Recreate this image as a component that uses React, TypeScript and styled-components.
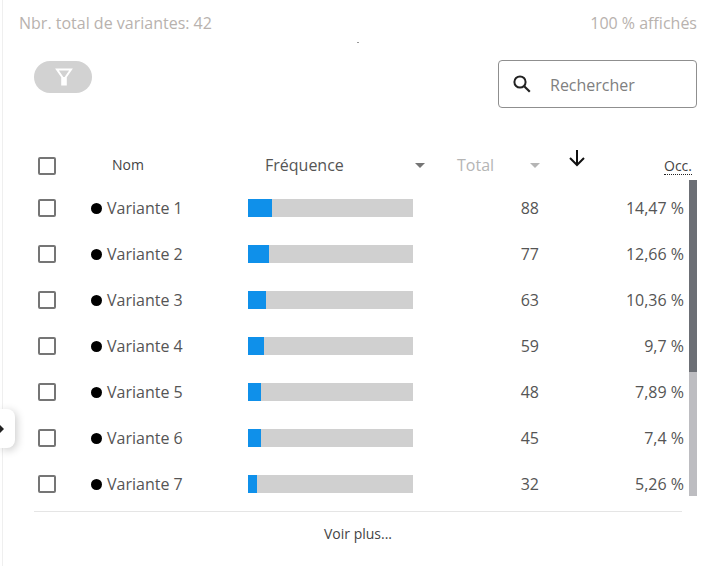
import styled, { createGlobalStyle } from "styled-components";

const GlobalStyle = createGlobalStyle`
  html, body {
    margin: 0;
    padding: 0;
    background: #fff;
    overflow: hidden;
    font-family: "Open Sans", "Liberation Sans", sans-serif;
  }
`;

const variants = [
  { name: "Variante 1", freq: 24, total: 88, occ: "14,47 %" },
  { name: "Variante 2", freq: 21, total: 77, occ: "12,66 %" },
  { name: "Variante 3", freq: 17.5, total: 63, occ: "10,36 %" },
  { name: "Variante 4", freq: 16, total: 59, occ: "9,7 %" },
  { name: "Variante 5", freq: 13, total: 48, occ: "7,89 %" },
  { name: "Variante 6", freq: 12.5, total: 45, occ: "7,4 %" },
  { name: "Variante 7", freq: 9, total: 32, occ: "5,26 %" },
];

const App = () => {
  return (
    <>
      <GlobalStyle />
      <Card>
        <SideHandle>
          <HandleCaret />
        </SideHandle>
        <Summary>
          <span>Nbr. total de variantes: 42</span>
          <span>100 % affichés</span>
        </Summary>
        <Speck />
        <Toolbar>
          <FilterButton aria-label="Filtrer">
            <svg width="18" height="18" viewBox="0 0 18 18">
              <path
                d="M2 1.5h14L10.8 9v7.5H7.2V9z"
                fill="none"
                stroke="#fff"
                strokeWidth="2"
              />
              <path d="M7.2 9h3.6v7.5H7.2z" fill="#fff" />
            </svg>
          </FilterButton>
          <SearchBox>
            <svg width="20" height="20" viewBox="0 0 20 20">
              <circle cx="8" cy="8" r="5.6" fill="none" stroke="#222" strokeWidth="2" />
              <path d="M12.2 12.2l5.6 5.6" stroke="#222" strokeWidth="2.2" />
            </svg>
            <SearchInput placeholder="Rechercher" />
          </SearchBox>
        </Toolbar>
        <HeaderRow>
          <HeaderCheckbox />
          <NameHead>Nom</NameHead>
          <FreqHead>
            <span>Fréquence</span>
            <Caret />
          </FreqHead>
          <TotalHead>
            <span>Total</span>
            <Caret $muted />
          </TotalHead>
          <ArrowCell>
            <svg width="18" height="18" viewBox="0 0 18 18">
              <path
                d="M9 1v15M2 9l7 7 7-7"
                fill="none"
                stroke="#111"
                strokeWidth="2"
              />
            </svg>
          </ArrowCell>
          <OccHead>Occ.</OccHead>
        </HeaderRow>
        <ListArea>
          <Rows>
            {variants.map((v) => (
              <Row key={v.name}>
                <Checkbox />
                <NameCell>
                  <Dot />
                  {v.name}
                </NameCell>
                <Bar>
                  <BarFill style={{ width: `${v.freq}px` }} />
                </Bar>
                <TotalCell>{v.total}</TotalCell>
                <OccCell>{v.occ}</OccCell>
              </Row>
            ))}
          </Rows>
          <ScrollTrack>
            <ScrollThumb />
          </ScrollTrack>
        </ListArea>
        <Footer>Voir plus...</Footer>
      </Card>
    </>
  );
};

const Card = styled.div`
  position: relative;
  box-sizing: border-box;
  width: 705px;
  height: 566px;
  margin-left: 2px;
  padding: 0 10px 0 0;
  border-left: 1px solid #efefef;
`;

const SideHandle = styled.div`
  position: absolute;
  left: -3px;
  top: 409px;
  width: 15px;
  height: 39px;
  display: flex;
  align-items: center;
  background: #fff;
  border-radius: 0 8px 8px 0;
  box-shadow: 2px 2px 8px rgba(0, 0, 0, 0.2);
`;

const HandleCaret = styled.div`
  width: 0;
  height: 0;
  border-top: 4px solid transparent;
  border-bottom: 4px solid transparent;
  border-left: 4px solid #222;
`;

const Summary = styled.div`
  display: flex;
  justify-content: space-between;
  padding: 12px 0 0 16px;
  height: 22px;
  line-height: 22px;
  font-size: 16px;
  color: #b8b2ae;
`;

const Speck = styled.div`
  width: 2px;
  height: 1px;
  margin: 8px 0 0 354px;
  background: #999;
`;

const Toolbar = styled.div`
  display: flex;
  justify-content: space-between;
  align-items: flex-start;
  margin-top: 17px;
  padding-left: 31px;
`;

const FilterButton = styled.button`
  width: 58px;
  height: 32px;
  margin-top: 1px;
  display: flex;
  align-items: center;
  justify-content: center;
  padding: 0 0 0 1px;
  border: none;
  border-radius: 16px;
  background: #d2d2d2;
`;

const SearchBox = styled.div`
  box-sizing: border-box;
  width: 199px;
  height: 48px;
  display: flex;
  align-items: center;
  gap: 18px;
  padding-left: 13px;
  border: 1px solid #8f8f8f;
  border-radius: 4px;
`;

const SearchInput = styled.input`
  width: 120px;
  padding: 2px 0 0;
  border: none;
  outline: none;
  font-family: inherit;
  font-size: 16px;
  color: #333;
  &::placeholder {
    color: #808080;
    opacity: 1;
  }
`;

const HeaderRow = styled.div`
  display: grid;
  grid-template-columns: 53px 157px 209px 111px 1fr auto;
  align-items: center;
  height: 36px;
  margin-top: 39px;
  padding: 0 5px 0 35px;
`;

const Checkbox = styled.div`
  box-sizing: border-box;
  width: 18px;
  height: 18px;
  border: 2px solid #757575;
  border-radius: 2px;
`;

const HeaderCheckbox = styled(Checkbox)`
  margin-top: 2px;
`;

const NameHead = styled.div`
  padding: 0 0 1px 21px;
  font-size: 14px;
  color: #444;
`;

const FreqHead = styled.div`
  display: flex;
  justify-content: space-between;
  align-items: center;
  padding: 0 32px 0 17px;
  font-size: 16px;
  color: #555;
`;

const TotalHead = styled.div`
  display: flex;
  align-items: center;
  gap: 36px;
  font-size: 16px;
  color: #b5b5b5;
`;

const Caret = styled.span<{ $muted?: boolean }>`
  width: 0;
  height: 0;
  border-left: 5px solid transparent;
  border-right: 5px solid transparent;
  border-top: 5px solid ${(p) => (p.$muted ? "#b5b5b5" : "#757575")};
`;

const ArrowCell = styled.div`
  display: flex;
  padding-bottom: 14px;
`;

const OccHead = styled.div`
  font-size: 14px;
  line-height: 17px;
  color: #444;
  margin-top: 1px;
  border-bottom: 1px dotted #222;
`;

const ListArea = styled.div`
  display: flex;
  align-items: flex-start;
  padding-left: 31px;
  margin-top: -3px;
`;

const Rows = styled.div`
  flex: 1;
  padding: 5px 5px 0 4px;
`;

const Row = styled.div`
  display: grid;
  grid-template-columns: 53px 157px 165px 126px 1fr;
  align-items: center;
  height: 46px;
  font-size: 16px;
  color: #555;
`;

const NameCell = styled.div`
  display: flex;
  align-items: center;
  gap: 5px;
`;

const Dot = styled.span`
  width: 11px;
  height: 11px;
  border-radius: 50%;
  background: #000;
`;

const Bar = styled.div`
  height: 18px;
  background: #d0d0d0;
`;

const BarFill = styled.div`
  height: 100%;
  background: #0f90ea;
`;

const TotalCell = styled.div`
  text-align: right;
`;

const OccCell = styled.div`
  text-align: right;
`;

const ScrollTrack = styled.div`
  width: 8px;
  height: 316px;
  background: #bdbdc1;
`;

const ScrollThumb = styled.div`
  height: 192px;
  background: #6c6f75;
`;

const Footer = styled.div`
  margin: 4px 15px 0 31px;
  padding-top: 12px;
  border-top: 1px solid #e5e5e5;
  text-align: center;
  font-size: 14px;
  color: #444;
`;

export default App;
